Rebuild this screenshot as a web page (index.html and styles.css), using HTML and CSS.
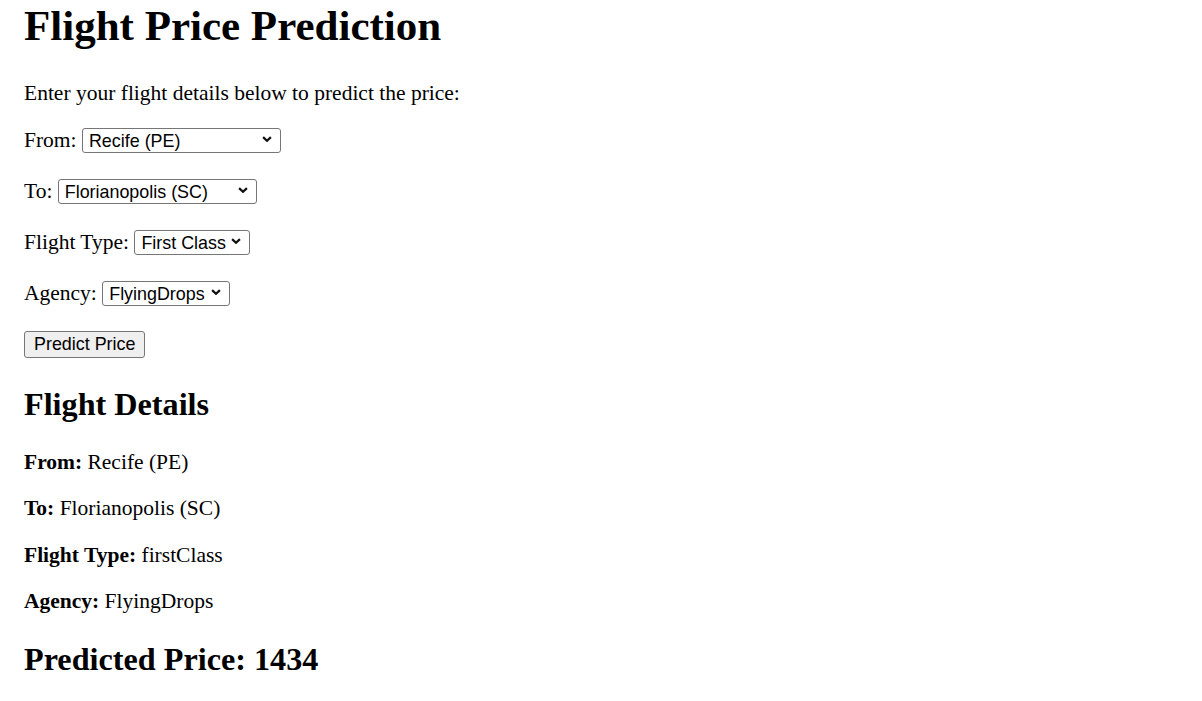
FILE: index.html
```html
<!DOCTYPE html>
<html lang="en">
<head>
<meta charset="utf-8">
<title>Flight Price Prediction</title>
<link rel="stylesheet" href="styles.css">
</head>
<body>
<h1 class="title">Flight Price Prediction</h1>
<p class="intro">Enter your flight details below to predict the price:</p>
<form class="form">
  <p class="field field-first">From: <span class="sel sel-wide"><select class="select"><option>Recife (PE)</option></select><svg class="chev" viewBox="0 0 10 6" width="10" height="6"><path d="M1.1 1.1 L5 4.8 L8.9 1.1" fill="none" stroke="#111" stroke-width="2.2"/></svg></span></p>
  <p class="field">To: <span class="sel sel-wide"><select class="select"><option>Florianopolis (SC)</option></select><svg class="chev" viewBox="0 0 10 6" width="10" height="6"><path d="M1.1 1.1 L5 4.8 L8.9 1.1" fill="none" stroke="#111" stroke-width="2.2"/></svg></span></p>
  <p class="field">Flight Type: <span class="sel sel-type"><select class="select"><option>First Class</option></select><svg class="chev" viewBox="0 0 10 6" width="10" height="6"><path d="M1.1 1.1 L5 4.8 L8.9 1.1" fill="none" stroke="#111" stroke-width="2.2"/></svg></span></p>
  <p class="field">Agency: <span class="sel sel-agency"><select class="select"><option>FlyingDrops</option></select><svg class="chev" viewBox="0 0 10 6" width="10" height="6"><path d="M1.1 1.1 L5 4.8 L8.9 1.1" fill="none" stroke="#111" stroke-width="2.2"/></svg></span></p>
  <p class="field field-btn"><button type="button" class="btn">Predict Price</button></p>
</form>
<h2 class="subtitle subtitle-first">Flight Details</h2>
<p class="detail"><strong>From:</strong> Recife (PE)</p>
<p class="detail"><strong>To:</strong> Florianopolis (SC)</p>
<p class="detail"><strong>Flight Type:</strong> firstClass</p>
<p class="detail"><strong>Agency:</strong> FlyingDrops</p>
<h2 class="subtitle">Predicted Price: 1434</h2>
</body>
</html>
```
FILE: styles.css
```css
html, body {
  background: #fff;
}
body {
  margin: 0 24px;
  padding-top: 1px;
  font-family: "Liberation Serif", "Times New Roman", serif;
  font-size: 21.5px;
  color: #000;
}
.title {
  font-size: 43px;
  font-weight: bold;
  margin: 0 0 31px;
  line-height: normal;
}
.intro {
  margin: 0 0 19.5px;
  line-height: normal;
}
.detail {
  margin: 21.5px 0;
  line-height: normal;
}
.form {
  margin: 0;
}
.field {
  margin: 21.5px 0;
  line-height: 29.5px;
}
.field-first {
  margin-top: 19.5px;
}
.sel {
  position: relative;
  display: inline-block;
  vertical-align: baseline;
}
.select {
  -webkit-appearance: none;
  appearance: none;
  box-sizing: border-box;
  width: 100%;
  height: 25px;
  margin: 0;
  padding: 0 20px 0 6px;
  border: 1px solid #767676;
  border-radius: 3px;
  background: #fff;
  color: #000;
  font-family: "Liberation Sans", Arial, sans-serif;
  font-size: 17.9px;
  line-height: normal;
}
.sel-wide { width: 199px; }
.sel-type { width: 116px; }
.sel-agency { width: 128px; }
.chev {
  position: absolute;
  right: 9px;
  top: 10px;
  pointer-events: none;
}
.field-btn {
  line-height: 27px;
}
.btn {
  box-sizing: border-box;
  height: 27px;
  margin: 0;
  padding: 0 9px;
  border: 1px solid #767676;
  border-radius: 3px;
  background: #efefef;
  color: #000;
  font-family: "Liberation Sans", Arial, sans-serif;
  font-size: 17.9px;
}
.subtitle {
  font-size: 32.2px;
  font-weight: bold;
  margin: 26.7px 0;
  line-height: normal;
}
.subtitle-first {
  margin-top: 28.5px;
}
```
